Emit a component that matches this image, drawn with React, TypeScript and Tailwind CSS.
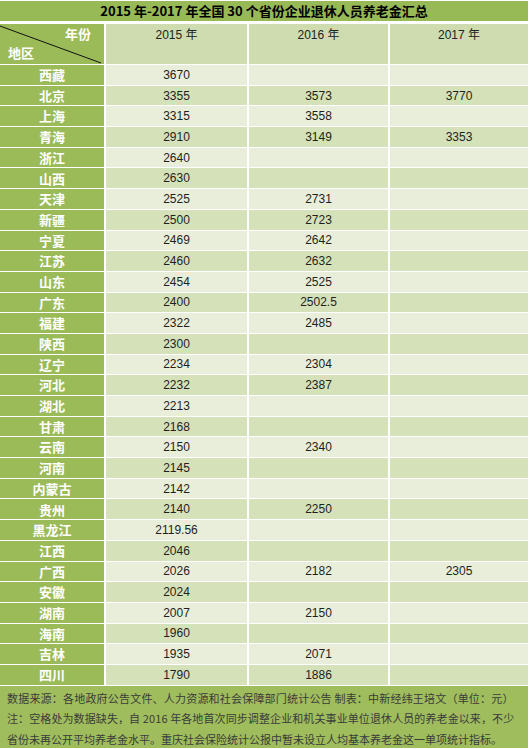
import React from "react";

type Row = { name: string; y2015: string; y2016?: string; y2017?: string };

const rows: Row[] = [
  { name: "西藏", y2015: "3670" },
  { name: "北京", y2015: "3355", y2016: "3573", y2017: "3770" },
  { name: "上海", y2015: "3315", y2016: "3558" },
  { name: "青海", y2015: "2910", y2016: "3149", y2017: "3353" },
  { name: "浙江", y2015: "2640" },
  { name: "山西", y2015: "2630" },
  { name: "天津", y2015: "2525", y2016: "2731" },
  { name: "新疆", y2015: "2500", y2016: "2723" },
  { name: "宁夏", y2015: "2469", y2016: "2642" },
  { name: "江苏", y2015: "2460", y2016: "2632" },
  { name: "山东", y2015: "2454", y2016: "2525" },
  { name: "广东", y2015: "2400", y2016: "2502.5" },
  { name: "福建", y2015: "2322", y2016: "2485" },
  { name: "陕西", y2015: "2300" },
  { name: "辽宁", y2015: "2234", y2016: "2304" },
  { name: "河北", y2015: "2232", y2016: "2387" },
  { name: "湖北", y2015: "2213" },
  { name: "甘肃", y2015: "2168" },
  { name: "云南", y2015: "2150", y2016: "2340" },
  { name: "河南", y2015: "2145" },
  { name: "内蒙古", y2015: "2142" },
  { name: "贵州", y2015: "2140", y2016: "2250" },
  { name: "黑龙江", y2015: "2119.56" },
  { name: "江西", y2015: "2046" },
  { name: "广西", y2015: "2026", y2016: "2182", y2017: "2305" },
  { name: "安徽", y2015: "2024" },
  { name: "湖南", y2015: "2007", y2016: "2150" },
  { name: "海南", y2015: "1960" },
  { name: "吉林", y2015: "1935", y2016: "2071" },
  { name: "四川", y2015: "1790", y2016: "1886" },
];

const cjk = { fontFamily: '"Noto Sans CJK SC", sans-serif' };
const num = { fontFamily: '"Liberation Sans", "Noto Sans CJK SC", sans-serif' };

const cols = "grid grid-cols-[104px_141px_139px_138px] gap-x-[2px]";

export default function App() {
  return (
    <div className="w-[531px] h-[749px] bg-white overflow-hidden pt-px">
      <div className="w-[528px]">
        {/* title */}
        <div
          className="h-[20px] bg-[#97b956] flex items-center justify-center text-[13px] font-bold text-black"
          style={cjk}
        >
          2015 年-2017 年全国 30 个省份企业退休人员养老金汇总
        </div>

        {/* header */}
        <div className={`${cols} mt-[3px] h-[40px]`}>
          <div className="relative bg-[#9bbb59] text-white font-bold text-[13px]" style={cjk}>
            <span className="absolute right-[13px] top-[3px] leading-[14px]">年份</span>
            <span className="absolute left-[8px] bottom-[4px] leading-[14px]">地区</span>
            <svg className="absolute inset-0" width="104" height="40" viewBox="0 0 104 40">
              <line x1="0" y1="2" x2="101" y2="39" stroke="#111" strokeWidth="1" />
            </svg>
          </div>
          {["2015 年", "2016 年", "2017 年"].map((y) => (
            <div key={y} className="bg-[#cfdcb0] text-center text-[12px] text-[#222] pt-[2px]" style={num}>
              {y}
            </div>
          ))}
        </div>

        {/* data rows */}
        <div className="flex flex-col gap-px mt-px">
          {rows.map((r, i) => {
            const bg = i % 2 === 0 ? "bg-[#e8eed9]" : "bg-[#d5e1b8]";
            return (
              <div key={r.name} className={`${cols} h-[19.7px]`}>
                <div
                  className="bg-[#9bbb59] text-white font-bold text-[13px] flex items-center justify-center"
                  style={cjk}
                >
                  {r.name}
                </div>
                {[r.y2015, r.y2016, r.y2017].map((v, j) => (
                  <div
                    key={j}
                    className={`${bg} text-[12px] text-[#1f1f1f] flex items-center justify-center`}
                    style={num}
                  >
                    {v ?? ""}
                  </div>
                ))}
              </div>
            );
          })}
        </div>

        {/* notes */}
        <div
          className="mt-px h-[62px] bg-[#9fbd5c] px-[7px] pt-[2px] text-[11px] leading-[20.5px] text-[#3b3b3b] whitespace-nowrap"
          style={cjk}
        >
          <div className="tracking-[0.2px]">
            数据来源：各地政府公告文件、人力资源和社会保障部门统计公告 制表：中新经纬王培文（单位：元）
          </div>
          <div className="tracking-[0.1px]">
            注：空格处为数据缺失，自 2016 年各地首次同步调整企业和机关事业单位退休人员的养老金以来，不少
          </div>
          <div>省份未再公开平均养老金水平。重庆社会保险统计公报中暂未设立人均基本养老金这一单项统计指标。</div>
        </div>
      </div>
    </div>
  );
}
